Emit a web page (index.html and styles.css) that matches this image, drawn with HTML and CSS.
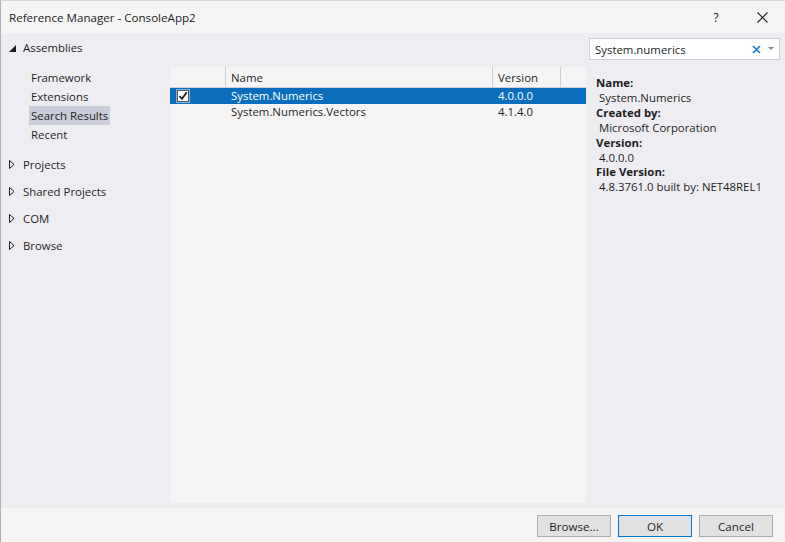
FILE: index.html
```html
<!DOCTYPE html>
<html>
<head>
<meta charset="utf-8">
<link rel="stylesheet" href="styles.css">
</head>
<body>
<div class="window">
  <div class="titlebar">
    <span class="title">Reference Manager - ConsoleApp2</span>
    <span class="tb-btn help">?</span>
    <span class="tb-btn close">
      <svg width="11" height="11" viewBox="0 0 11 11"><path d="M0.5 0.5 L10.5 10.5 M10.5 0.5 L0.5 10.5" stroke="#1e1e1e" stroke-width="1.1" fill="none"/></svg>
    </span>
  </div>
  <div class="main">
    <div class="sidebar">
      <div class="group">
        <div class="node expanded">
          <svg class="tri" width="7" height="7" viewBox="0 0 7 7"><path d="M7 0 L7 7 L0 7 Z" fill="#1e1e1e"/></svg>
          <span>Assemblies</span>
        </div>
        <div class="children">
          <div class="child">Framework</div>
          <div class="child">Extensions</div>
          <div class="child selected">Search Results</div>
          <div class="child">Recent</div>
        </div>
      </div>
      <div class="node collapsed">
        <svg class="tri" width="6" height="9" viewBox="0 0 6 9"><path d="M0.5 0.5 L5 4.5 L0.5 8.5 Z" fill="none" stroke="#1e1e1e" stroke-width="1"/></svg>
        <span>Projects</span>
      </div>
      <div class="node collapsed">
        <svg class="tri" width="6" height="9" viewBox="0 0 6 9"><path d="M0.5 0.5 L5 4.5 L0.5 8.5 Z" fill="none" stroke="#1e1e1e" stroke-width="1"/></svg>
        <span>Shared Projects</span>
      </div>
      <div class="node collapsed">
        <svg class="tri" width="6" height="9" viewBox="0 0 6 9"><path d="M0.5 0.5 L5 4.5 L0.5 8.5 Z" fill="none" stroke="#1e1e1e" stroke-width="1"/></svg>
        <span>COM</span>
      </div>
      <div class="node collapsed">
        <svg class="tri" width="6" height="9" viewBox="0 0 6 9"><path d="M0.5 0.5 L5 4.5 L0.5 8.5 Z" fill="none" stroke="#1e1e1e" stroke-width="1"/></svg>
        <span>Browse</span>
      </div>
    </div>
    <div class="center">
      <div class="list">
        <div class="row header">
          <div class="c-check"></div>
          <div class="c-name">Name</div>
          <div class="c-ver">Version</div>
          <div class="c-extra"></div>
        </div>
        <div class="row item selected">
          <div class="c-check">
            <svg class="cb" width="14" height="14" viewBox="0 0 14 14">
              <rect x="0.5" y="0.5" width="13" height="13" fill="none" stroke="#ffffff" stroke-dasharray="1 1"/>
              <rect x="1.5" y="1.5" width="11" height="11" fill="#ffffff" stroke="#555555"/>
              <path d="M3.5 7 L6 9.8 L10.8 3.2" fill="none" stroke="#1e1e1e" stroke-width="1.8"/>
            </svg>
          </div>
          <div class="c-name">System.Numerics</div>
          <div class="c-ver">4.0.0.0</div>
          <div class="c-extra"></div>
        </div>
        <div class="row item">
          <div class="c-check"></div>
          <div class="c-name">System.Numerics.Vectors</div>
          <div class="c-ver">4.1.4.0</div>
          <div class="c-extra"></div>
        </div>
      </div>
    </div>
    <div class="right">
      <div class="search">
        <span class="search-text">System.numerics</span>
        <svg class="clear" width="9" height="9" viewBox="0 0 9 9"><path d="M1 1 L8 8 M8 1 L1 8" stroke="#1c7bd1" stroke-width="1.6" fill="none"/></svg>
        <svg class="drop" width="6" height="4" viewBox="0 0 6 4"><path d="M0 0 L6 0 L3 3 Z" fill="#8a8a8a"/></svg>
      </div>
      <div class="details">
        <div class="label">Name:</div>
        <div class="value">System.Numerics</div>
        <div class="label">Created by:</div>
        <div class="value">Microsoft Corporation</div>
        <div class="label">Version:</div>
        <div class="value">4.0.0.0</div>
        <div class="label">File Version:</div>
        <div class="value">4.8.3761.0 built by: NET48REL1</div>
      </div>
    </div>
  </div>
  <div class="footer">
    <button class="btn">Browse...</button>
    <button class="btn default">OK</button>
    <button class="btn">Cancel</button>
  </div>
</div>
</body>
</html>
```
FILE: styles.css
```css
* { box-sizing: border-box; }
html, body { margin: 0; padding: 0; }
body {
  width: 785px;
  height: 542px;
  overflow: hidden;
  font-family: "Segoe UI", "Open Sans", "Noto Sans", sans-serif;
  font-size: 11.4px;
  color: #1e1e1e;
  background: #f5f5f5;
}
.window {
  width: 785px;
  height: 542px;
  display: flex;
  flex-direction: column;
  border-left: 1px solid #b4b4b4;
  border-top: 1px solid #d6d6d6;
}
.titlebar {
  height: 32px;
  flex: none;
  display: flex;
  align-items: center;
  background: #f5f5f5;
  padding-left: 8px;
}
.title { flex: 1; font-size: 11.6px; }
.tb-btn {
  width: 46px;
  display: flex;
  justify-content: center;
  align-items: center;
}
.help { font-size: 12px; }
.main {
  flex: 1;
  display: flex;
  background: #eeeef2;
}
.sidebar {
  width: 169px;
  flex: none;
  padding-top: 1px;
}
.node {
  height: 27px;
  display: flex;
  align-items: center;
  padding-left: 8px;
}
.node .tri { margin-right: 7px; }
.node.collapsed .tri { margin-left: 0; margin-right: 8px; }
.node.expanded .tri { margin-top: 1px; }
.children {
  padding-top: 7px;
  padding-left: 28px;
  padding-bottom: 7px;
}
.child {
  height: 19px;
  line-height: 19px;
  padding: 0 2px;
  width: fit-content;
}
.child.selected { background: #cbcdda; }
.center {
  width: 416px;
  flex: none;
  padding-top: 34px;
  padding-bottom: 5px;
  display: flex;
}
.list {
  flex: 1;
  background: #f5f5f5;
}
.row {
  display: flex;
  height: 16px;
  line-height: 16px;
}
.row.header {
  height: 21px;
  line-height: 21px;
  border-bottom: 1px solid #cccedb;
}
.row.header > div { border-right: 1px solid #cccedb; }
.row.header .c-extra { border-right: none; }
.c-check { width: 56px; flex: none; display: flex; align-items: center; padding-left: 6px; }
.c-name { width: 267px; flex: none; padding-left: 5px; }
.c-ver { width: 68px; flex: none; padding-left: 5px; }
.c-extra { flex: 1; }
.row.selected { background: #0a6ebd; color: #ffffff; }
.right {
  flex: 1;
  padding-top: 5px;
  padding-left: 3px;
}
.search {
  width: 191px;
  height: 22px;
  background: #ffffff;
  border: 1px solid #cccedb;
  display: flex;
  align-items: center;
  padding-left: 5px;
}
.search-text { flex: 1; }
.clear { margin-right: 7px; }
.drop { margin-right: 5px; }
.details {
  padding-top: 16px;
  padding-left: 7px;
  line-height: 14.9px;
}
.label { font-weight: bold; }
.value { padding-left: 3px; }
.footer {
  height: 34px;
  flex: none;
  background: #f5f5f5;
  display: flex;
  justify-content: flex-end;
  align-items: flex-start;
  padding-top: 7px;
  padding-right: 12px;
  gap: 7px;
}
.btn {
  width: 74px;
  height: 22px;
  background: #e1e1e1;
  border: 1px solid #adadad;
  font-family: inherit;
  font-size: 11.6px;
  color: #1e1e1e;
  padding: 0;
}
.btn.default { border-color: #0078d7; }
```
